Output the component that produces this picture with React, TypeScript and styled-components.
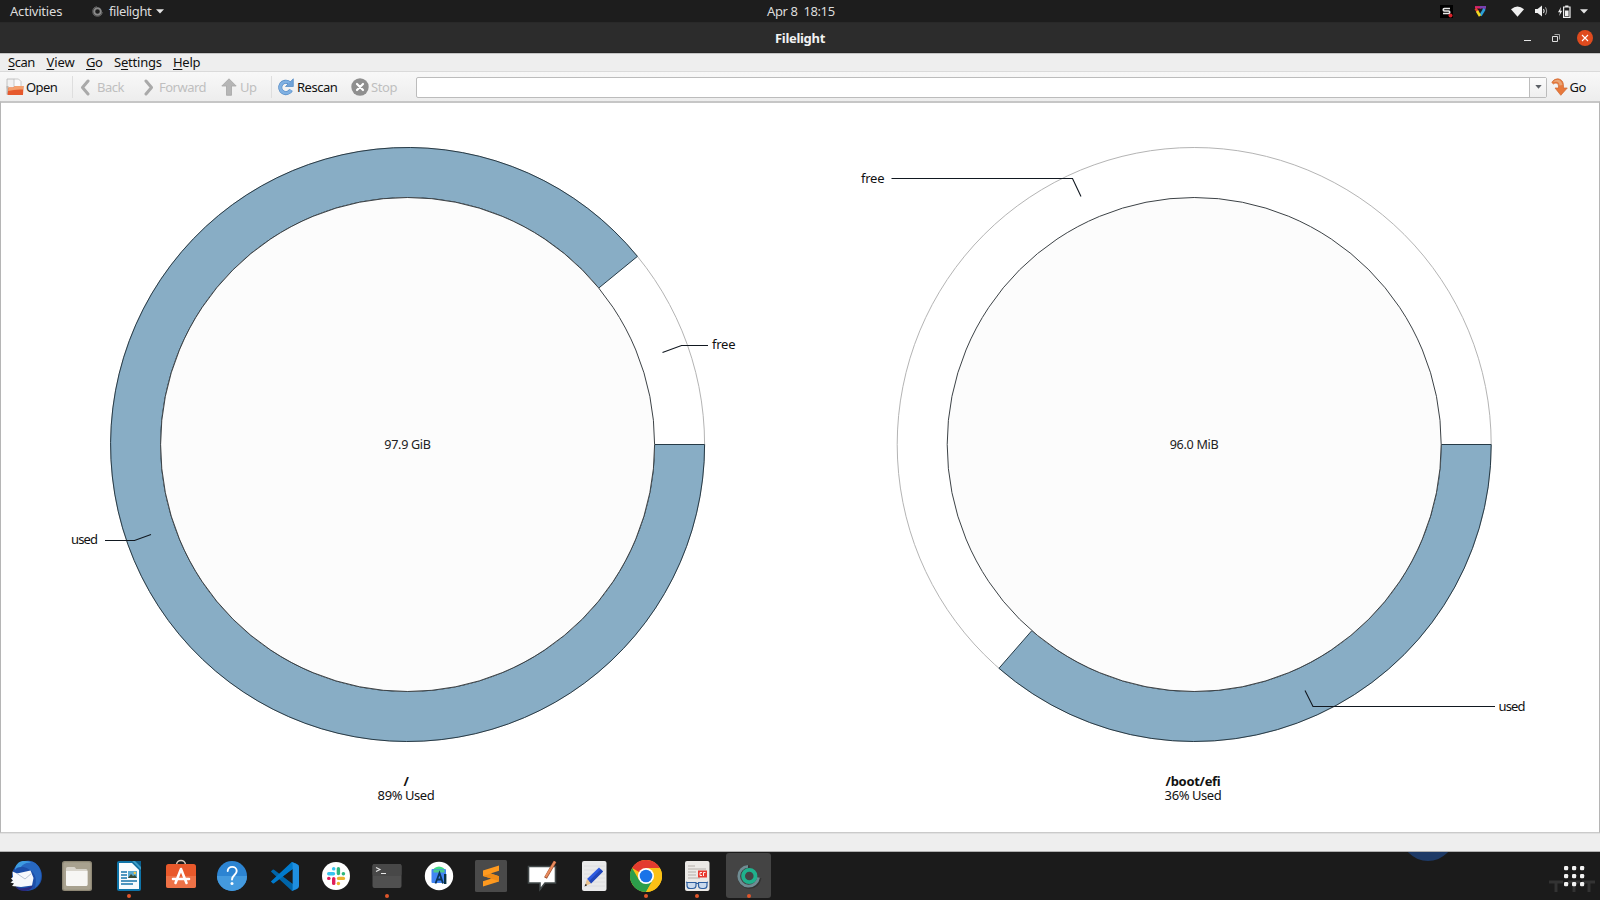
import React from "react";
import styled, { createGlobalStyle } from "styled-components";

const GlobalStyle = createGlobalStyle`
  * { box-sizing: border-box; }
  html, body { margin: 0; padding: 0; background: #1b1b1b; overflow: hidden; }
  body { font-family: "Noto Sans", "Open Sans", sans-serif; font-size: 13px; color: #111; }
  svg { display: block; flex: none; }
`;

const Desktop = styled.div`
  width: 1600px;
  height: 900px;
  display: flex;
  flex-direction: column;
  overflow: hidden;
`;

const TopBar = styled.header`
  height: 22px;
  flex: none;
  background: #1d1d1d;
  color: #dcdcdc;
  display: grid;
  grid-template-columns: 1fr auto 1fr;
  align-items: center;
`;

const TopGroup = styled.div<{ $end?: boolean }>`
  display: flex;
  align-items: center;
  height: 22px;
  justify-content: ${(p) => (p.$end ? "flex-end" : "flex-start")};
`;

/* One run of text in a slot of fixed width */
const Label = styled.span<{ $w: number; $ml?: number; $ls?: number; $dim?: boolean }>`
  display: block;
  flex: none;
  white-space: pre;
  line-height: 18px;
  width: ${(p) => p.$w}px;
  margin-left: ${(p) => p.$ml ?? 0}px;
  letter-spacing: ${(p) => p.$ls ?? -0.2}px;
  color: ${(p) => (p.$dim ? "#bfbfbf" : "inherit")};
  u { text-underline-offset: 2px; text-decoration-thickness: 1px; }
`;

const Gap = styled.span<{ $w: number }>`
  flex: none;
  width: ${(p) => p.$w}px;
`;

const TitleBar = styled.div`
  height: 31px;
  flex: none;
  background: #2c2c2c;
  border-top: 1px solid #292929;
  border-bottom: 1px solid #262626;
  display: grid;
  grid-template-columns: 1fr auto 1fr;
  align-items: center;
  color: #f2f2f2;
`;

const WindowTitle = styled.h1`
  margin: 0;
  font-size: 13px;
  line-height: 18px;
  font-weight: 700;
  letter-spacing: -0.3px;
`;

const WindowButtons = styled.div`
  display: flex;
  justify-content: flex-end;
  align-items: center;
  padding-right: 7px;
`;

const CloseButton = styled.div`
  width: 16px;
  height: 16px;
  border-radius: 50%;
  background: #df4b1e;
  margin-left: 17px;
  display: flex;
  align-items: center;
  justify-content: center;
`;

const MenuBar = styled.nav`
  height: 19px;
  flex: none;
  background: #eeeeee;
  border-top: 1px solid #c4c4c4;
  border-bottom: 1px solid #dadada;
  display: flex;
  align-items: center;
  padding: 0 0 2px 8px;
`;

const ToolBar = styled.div`
  height: 29px;
  flex: none;
  background: linear-gradient(#f8f8f8, #ededed);
  display: flex;
  align-items: center;
  padding: 1px 0 0 6px;
`;

const Separator = styled.span<{ $ml: number }>`
  flex: none;
  width: 1px;
  height: 22px;
  background: #dedede;
  margin-left: ${(p) => p.$ml}px;
`;

const PathCombo = styled.div`
  width: 1131px;
  height: 21px;
  flex: none;
  margin-left: 19px;
  border: 1px solid #bcbcbc;
  border-radius: 2px;
  background: #fff;
  display: flex;
  justify-content: flex-end;
`;

const ComboArrow = styled.div`
  width: 17px;
  border-left: 1px solid #bcbcbc;
  background: linear-gradient(#fbfbfb, #efefef);
  display: flex;
  align-items: center;
  justify-content: center;
`;

const MapView = styled.main`
  height: 732px;
  flex: none;
  background: #fff;
  border: 1px solid #b5b5b5;
  border-top: 2px solid #c6c6c6;
  border-bottom: 1px solid #cacaca;
  display: grid;
  grid-template-columns: 813px 1fr;
`;

const Volume = styled.section`
  display: flex;
  flex-direction: column;
  align-items: flex-start;
`;

const Caption = styled.div<{ $shift: number }>`
  width: 200px;
  margin-left: ${(p) => p.$shift}px;
  text-align: center;
  line-height: 14px;
  letter-spacing: -0.42px;
  strong { display: block; letter-spacing: -0.3px; }
`;

const StatusBar = styled.footer`
  height: 19px;
  flex: none;
  background: #eeeeee;
  border-top: 1px solid #e0e0e0;
  border-bottom: 1px solid #b0b0b0;
`;

const Dock = styled.div`
  position: relative;
  height: 48px;
  flex: none;
  background: #1b1b1b;
  display: flex;
  overflow: hidden;
`;

const DockItem = styled.div<{ $active?: boolean; $running?: boolean }>`
  position: relative;
  width: 51.65px;
  height: 48px;
  flex: none;
  display: flex;
  align-items: center;
  justify-content: center;
  &::before {
    content: "";
    display: ${(p) => (p.$active ? "block" : "none")};
    position: absolute;
    inset: 1px 3.5px 2px 3.5px;
    border-radius: 3px;
    background: #444;
  }
  &::after {
    content: "";
    display: ${(p) => (p.$running ? "block" : "none")};
    position: absolute;
    left: 24px;
    bottom: 2px;
    width: 4px;
    height: 4px;
    border-radius: 50%;
    background: #e0562b;
  }
  svg { position: relative; }
`;

const BlueGlow = styled.div`
  position: absolute;
  left: 1401px;
  top: -45px;
  width: 54px;
  height: 54px;
  border-radius: 50%;
  background: #1e3a66;
`;

const AppsButton = styled.div`
  position: absolute;
  left: 1548px;
  top: 12px;
`;

type Point = [number, number];

interface RingProps {
  cx: number;
  width: number;
  usedDeg: number;
  size: string;
  sizeWidth: number;
  lines: { points: Point[]; label: string; x: number; y: number; w: number }[];
}

const CY = 341.5;
const R_OUT = 297;
const R_IN = 247;

function Ring({ cx, width, usedDeg, size, sizeWidth, lines }: RingProps) {
  const a = (usedDeg * Math.PI) / 180;
  const at = (r: number) => `${cx + r * Math.cos(a)} ${CY + r * Math.sin(a)}`;
  const large = usedDeg > 180 ? 1 : 0;
  return (
    <svg width={width} height={671} viewBox={`0 0 ${width} 671`}>
      <circle cx={cx} cy={CY} r={R_OUT} fill="#fff" stroke="#b4b4b4" strokeWidth="1" />
      <path
        d={`M${cx + R_OUT} ${CY} A${R_OUT} ${R_OUT} 0 ${large} 1 ${at(R_OUT)} L${at(R_IN)} A${R_IN} ${R_IN} 0 ${large} 0 ${cx + R_IN} ${CY} Z`}
        fill="#88adc5"
        stroke="#263a46"
        strokeWidth="1"
      />
      <circle cx={cx} cy={CY} r={R_IN} fill="#fcfcfc" stroke="#3c4246" strokeWidth="1" />
      <text x={cx - sizeWidth / 2} y={CY + 4.5} fontSize="12.6" fill="#222" textLength={sizeWidth}>
        {size}
      </text>
      {lines.map((l) => (
        <g key={l.label}>
          <polyline points={l.points.map((p) => p.join(",")).join(" ")} fill="none" stroke="#111820" strokeWidth="1.1" />
          <text x={l.x} y={l.y} fontSize="13" fill="#111" textLength={l.w}>
            {l.label}
          </text>
        </g>
      ))}
    </svg>
  );
}

const Thunderbird = () => (
  <svg width="34" height="34" viewBox="0 0 34 34">
    <circle cx="18" cy="17" r="15" fill="#1d4fa8" />
    <path d="M8 7C13 0 25 0 30 8c4 8 2 17-4 21 2-8 1-14-5-18-4-3-9-4-13-4z" fill="#2868c0" />
    <path d="M14 2c3 0 6 0 8 2-4-1-8 1-10 4-3 0-5 1-6 3 0-5 4-9 8-9z" fill="#3d9be0" />
    <path d="M3.500 12.500L8 14.500 21.500 11.500 24.500 19 23 26.500 12 28 3 27l2-2.500-3.500-1L4 21.500 2 19.500l2-1.500z" fill="#f7f9fc" />
    <path d="M8 14.500l8 5.500 7-6" fill="none" stroke="#b8c4d4" strokeWidth="1" />
    <path d="M6 27.500c5 2.500 11 2.500 18-1-3 7-13 7.500-18 1z" fill="#2b2a80" />
  </svg>
);

const Files = () => (
  <svg width="34" height="34" viewBox="0 0 34 34">
    <rect x="2" y="2" width="30" height="30" rx="2.500" fill="#8f8876" />
    <rect x="3.300" y="3.300" width="27.400" height="27.400" rx="1.800" fill="#a8a18f" />
    <path d="M6 9.500Q6 8 7.500 8H14q1 0 1.500 1l.5 1h10q1.500 0 1.500 1.500V25q0 1.500-1.500 1.500H7.500Q6 26.500 6 25z" fill="#d8d4cb" />
    <path d="M6 12h21.500v13.500q0 1.500-1.500 1.500H7.500Q6 27 6 25.500z" fill="#f7f6f4" />
  </svg>
);

const Writer = () => (
  <svg width="34" height="34" viewBox="0 0 34 34">
    <path d="M5 4q0-2 2-2h14l8 0v28q0 2-2 2H7q-2 0-2-2z" fill="#0f74a8" />
    <path d="M7 4h13l7 7v19H7z" fill="#f8fbfd" />
    <path d="M19 2h10v10z" fill="#0c5f8c" />
    <path d="M20 2l9 9V8l-6-6z" fill="#3a9cc8" />
    <path d="M9 13h6M9 16h6M9 19h6M9 22h16M9 25h12" stroke="#1876ab" strokeWidth="1.400" />
    <rect x="16" y="12" width="9" height="7" fill="#5aa9cf" />
    <path d="M16 19l3-4 2 2 2-1 2 3z" fill="#384a33" />
    <circle cx="22.800" cy="14" r="1.200" fill="#f5c842" />
  </svg>
);

const Software = () => (
  <svg width="34" height="34" viewBox="0 0 34 34">
    <path d="M12.500 6c0-6 9-6 9 0" fill="none" stroke="#d9c7b8" strokeWidth="1.400" />
    <rect x="2" y="5" width="30" height="24" rx="2.500" fill="#e9592b" />
    <path d="M2 17h30v9.500q0 2.500-2.500 2.500h-25Q2 29 2 26.500z" fill="#ee7247" />
    <path d="M11.500 24L17 10l5.500 14M9 20h16" fill="none" stroke="#fff" strokeWidth="2.600" strokeLinecap="round" strokeLinejoin="round" />
  </svg>
);

const HelpIcon = () => (
  <svg width="34" height="34" viewBox="0 0 34 34">
    <circle cx="17" cy="17" r="15" fill="#2c84d2" />
    <path d="M2 17a15 15 0 0 0 30 0z" fill="#449ade" />
    <path d="M12.700 12c0-5.600 9-5.400 9 0 0 4-4.700 4-4.700 8.500" fill="none" stroke="#fff" strokeWidth="1.900" strokeLinecap="round" />
    <circle cx="17" cy="24.500" r="1.500" fill="#fff" />
  </svg>
);

const VsCode = () => (
  <svg width="29" height="29" viewBox="0 0 100 100">
    <path d="M3 33l6-6q2-2 5 0l82 62q-3 5-6 6l-14 5z" fill="#0065a9" />
    <path d="M3 67l6 6q2 2 5 0L96 11 90 5 75 0z" fill="#007acc" />
    <path d="M75 0l20 9q5 2 5 8v66q0 6-5 8l-20 9q3-2 3-7V8q0-6-3-8z" fill="#1f8fe0" />
    <path d="M76 28v44L47 50z" fill="#1b1b1b" />
  </svg>
);

const Slack = () => (
  <svg width="30" height="30" viewBox="0 0 30 30">
    <circle cx="15" cy="15" r="14" fill="#fff" />
    <g strokeWidth="3.400" strokeLinecap="round">
      <path d="M7.700 12.700h4.800" stroke="#36c5f0" />
      <path d="M12.700 7.600v.3" stroke="#36c5f0" />
      <path d="M17.400 7.700v4.800" stroke="#2eb67d" />
      <path d="M22.300 12.700h.2" stroke="#2eb67d" />
      <path d="M17.600 17.400h4.800" stroke="#ecb22e" />
      <path d="M17.400 22.400v.2" stroke="#ecb22e" />
      <path d="M12.700 17.600v4.800" stroke="#e01e5a" />
      <path d="M7.700 17.400h.2" stroke="#e01e5a" />
    </g>
  </svg>
);

const Terminal = () => (
  <svg width="30" height="26" viewBox="0 0 30 26">
    <rect x="0.500" y="1" width="29" height="24" rx="2" fill="#505050" />
    <rect x="0.500" y="1" width="29" height="12" rx="2" fill="#484848" />
    <path d="M4 4.500l4 2-4 2M9 10.500h5" fill="none" stroke="#e8e8e8" strokeWidth="1.100" />
  </svg>
);

const AndroidStudio = () => (
  <svg width="30" height="30" viewBox="0 0 30 30">
    <circle cx="15" cy="15" r="14.200" fill="#fff" />
    <path d="M9 9q1-3 6-3.500 5 .5 6 3.500z" fill="#3ddc84" />
    <rect x="7.500" y="8" width="14.500" height="14" rx="1" fill="#4285f4" />
    <path d="M9.500 8.500h11v3h-11z" fill="#4cc98d" />
    <path d="M11.500 22.500L15.500 12l3.500 10.500M13 18.500h5" fill="none" stroke="#0b3558" strokeWidth="1.800" />
    <path d="M20 13h2.400v10H20z" fill="#073042" />
  </svg>
);

const Sublime = () => (
  <svg width="32" height="32" viewBox="0 0 32 32">
    <rect width="32" height="32" rx="1.500" fill="#4a4a4a" />
    <path d="M8 10.500L24 5.500v5.300L15.500 13.500 24 16.200v5.200L8 26.500v-5.200l8.500-2.700L8 16z" fill="#ff9a1f" />
    <path d="M8 16l8-2.600 8 2.800v5l-8-2.600z" fill="#f08c18" />
  </svg>
);

const Board = () => (
  <svg width="34" height="34" viewBox="0 0 34 34">
    <path d="M3.500 7.500H30.500V24H20l-5 6.500V24H3.500z" fill="#fff" stroke="#42494a" strokeWidth="1.600" />
    <path d="M30 2.500L20.500 19" stroke="#9d4f2c" strokeWidth="3.200" />
    <path d="M30 2.500L20.800 18" stroke="#e98b5e" strokeWidth="2.200" />
  </svg>
);

const Editor = () => (
  <svg width="34" height="34" viewBox="0 0 34 34">
    <rect x="5" y="2" width="24.500" height="30" rx="2" fill="#e9e9ea" />
    <path d="M7 7h21M7 11h21M7 15h21M7 19h21M7 23h21M7 27h21" stroke="#dcdcdf" strokeWidth="1" />
    <path d="M22 8.500l4 4L14 24.500l-4-4.500z" fill="#2d5ae0" />
    <path d="M23.800 10.300l2.200 2.200L14 24.500l-2-2.200z" fill="#2146b8" />
    <path d="M10 20l4 4.500-6 2.500z" fill="#e8c08c" />
    <path d="M8.700 24.800l1.400 1.500L7.500 27.500z" fill="#222" />
  </svg>
);

const Chrome = () => (
  <svg width="32" height="32" viewBox="0 0 32 32">
    <circle cx="16" cy="16" r="16" fill="#fbc116" />
    <path d="M16 16L2.140 8A16 16 0 0 1 29.860 8H16z" fill="#e33b2e" />
    <path d="M2.140 8A16 16 0 0 0 16 32l6.930-12L16 16 9.070 20z" fill="#2c9e4b" />
    <path d="M29.860 8A16 16 0 0 1 16 32l6.930-12L16 8z" fill="#fbc116" />
    <circle cx="16" cy="16" r="8" fill="#fff" />
    <circle cx="16" cy="16" r="6.300" fill="#1a73e8" />
  </svg>
);

const DocViewer = () => (
  <svg width="34" height="34" viewBox="0 0 34 34">
    <rect x="5" y="2" width="24.500" height="30" rx="2" fill="#ebe9e6" />
    <path d="M8 7h7M8 10h18M8 13h8M8 16h8M8 19h12" stroke="#b5b0a9" strokeWidth="1.100" />
    <rect x="18" y="11.500" width="9" height="7" fill="#e8392f" />
    <path d="M22 13.500h-2v3h2M23.500 17v-3.500h2" fill="none" stroke="#fff" strokeWidth=".9" />
    <path d="M7 23.500h9v3q0 3-3.500 3H10q-3 0-3-3zM18.500 23.500h8.500v3q0 3-3 3H22q-3.500 0-3.500-3zM16 24.500h2.500M7 23.500l-1-.5M27 23.500l1-.5" fill="#c9d9ec" stroke="#2e5f9f" strokeWidth="1.200" />
  </svg>
);

const FilelightIcon = () => (
  <svg width="28" height="28" viewBox="0 0 28 28">
    <path d="M14 3.500A10.500 10.500 0 1 0 24.500 15" fill="none" stroke="#333" strokeWidth="2.500" transform="translate(.6 1)" />
    <path d="M13 4.300A9.900 9.900 0 1 0 23.500 15.500" fill="none" stroke="#6f8c93" strokeWidth="2.800" />
    <circle cx="14.300" cy="14" r="6.200" fill="none" stroke="#1fb18c" strokeWidth="3.800" />
  </svg>
);

const DOCK = [
  { id: "thunderbird", icon: <Thunderbird /> },
  { id: "files", icon: <Files /> },
  { id: "writer", icon: <Writer />, running: true },
  { id: "software", icon: <Software /> },
  { id: "help", icon: <HelpIcon /> },
  { id: "code", icon: <VsCode /> },
  { id: "slack", icon: <Slack /> },
  { id: "terminal", icon: <Terminal />, running: true },
  { id: "studio", icon: <AndroidStudio /> },
  { id: "sublime", icon: <Sublime /> },
  { id: "board", icon: <Board /> },
  { id: "editor", icon: <Editor /> },
  { id: "chrome", icon: <Chrome />, running: true },
  { id: "viewer", icon: <DocViewer />, running: true },
  { id: "filelight", icon: <FilelightIcon />, running: true, active: true },
];

export default function App() {
  return (
    <>
      <GlobalStyle />
      <Desktop>
        <TopBar>
          <TopGroup>
            <Label $w={53} $ml={10}>Activities</Label>
            <Gap $w={29} />
            <svg width="11" height="11" viewBox="0 0 11 11">
              <circle cx="5.500" cy="5.500" r="3.300" fill="none" stroke="#8a8a8a" strokeWidth="2" />
              <path d="M5 .8A4.700 4.700 0 1 0 10.200 6" fill="none" stroke="#6e6e6e" strokeWidth="1" />
            </svg>
            <Label $w={43} $ml={6} $ls={-0.4}>filelight</Label>
            <Gap $w={4} />
            <svg width="8" height="5" viewBox="0 0 8 5"><path d="M0 .3h8L4 4.600z" fill="#e4e4e4" /></svg>
          </TopGroup>
          <Label $w={66} $ls={-0.4}>Apr 8  18:15</Label>
          <TopGroup $end>
            <svg width="13" height="13" viewBox="0 0 13 13">
              <rect width="13" height="13" fill="#000" />
              <path d="M10 3.500H4.300q-1 0-1 1.200t1 1.300h4.400q1 0 1 1.200t-1 1.300H3" fill="none" stroke="#e8e8e8" strokeWidth="1.700" />
              <circle cx="10.500" cy="10.500" r="2" fill="#d8232a" />
            </svg>
            <Gap $w={21} />
            <svg width="12" height="11" viewBox="0 0 12 11">
              <path d="M1 1.300h6" stroke="#d6246e" strokeWidth="2.400" />
              <path d="M6 1.300h5L9.500 4" fill="none" stroke="#7a3fae" strokeWidth="2.400" />
              <path d="M10.500 3L6.500 9.500" stroke="#2a9fd8" strokeWidth="2.600" />
              <path d="M1.500 2.500L4 6" stroke="#e8432e" strokeWidth="2.400" />
              <path d="M3 5l3 5" stroke="#f1d822" strokeWidth="2.600" />
            </svg>
            <Gap $w={25} />
            <svg width="13" height="11" viewBox="0 0 13 11"><path d="M0 3.200Q6.500-2.200 13 3.200L6.500 10.800z" fill="#efefef" /></svg>
            <Gap $w={11} />
            <svg width="13" height="12" viewBox="0 0 13 12">
              <path d="M0 4h2.500L7 .5v11L2.500 8H0z" fill="#efefef" />
              <path d="M8.500 4q1.400 2 0 4" fill="none" stroke="#efefef" strokeWidth="1.100" />
              <path d="M10.300 2.300q2.600 3.700 0 7.400" fill="none" stroke="#999" strokeWidth="1.100" />
            </svg>
            <Gap $w={10} />
            <svg width="13" height="13" viewBox="0 0 13 13">
              <path d="M3 2L0 7.300h2L1.200 11 4.200 5.800H2.400z" fill="#efefef" />
              <path d="M5.600 2h6.400v10.400H5.600zM7.200 1h3.200" fill="none" stroke="#efefef" strokeWidth="1.200" />
              <path d="M7 5.500h3.600v5.600H7z" fill="#efefef" />
            </svg>
            <Gap $w={9} />
            <svg width="8" height="5" viewBox="0 0 8 5"><path d="M0 .3h8L4 4.600z" fill="#e4e4e4" /></svg>
            <Gap $w={12} />
          </TopGroup>
        </TopBar>

        <TitleBar>
          <span />
          <WindowTitle>Filelight</WindowTitle>
          <WindowButtons>
            <svg width="7" height="8" viewBox="0 0 7 8"><path d="M0 6.500h7" stroke="#e6e6e6" /></svg>
            <Gap $w={21} />
            <svg width="8" height="8" viewBox="0 0 8 8">
              <path d="M.5 2.500h5v5h-5z" fill="none" stroke="#dedede" />
              <path d="M2.500.5h5v5" fill="none" stroke="#a5a5a5" />
            </svg>
            <CloseButton>
              <svg width="8" height="8" viewBox="0 0 8 8"><path d="M1 1l6 6M7 1L1 7" stroke="#fff" strokeWidth="1.100" /></svg>
            </CloseButton>
          </WindowButtons>
        </TitleBar>

        <MenuBar>
          <Label $w={27} $ls={-0.5}><u>S</u>can</Label>
          <Label $w={29} $ml={11.5} $ls={-0.1}><u>V</u>iew</Label>
          <Label $w={16} $ml={10.500} $ls={-0.4}><u>G</u>o</Label>
          <Label $w={47} $ml={12}>S<u>e</u>ttings</Label>
          <Label $w={28} $ml={12} $ls={-0.3}><u>H</u>elp</Label>
        </MenuBar>

        <ToolBar>
          <svg width="18" height="18" viewBox="0 0 18 18">
            <path d="M1 1h7l2 1.500v8H1z" fill="#f1f1f1" stroke="#b5b5b5" strokeWidth=".8" />
            <path d="M8 1h4.500l2.500 2.500V11H8z" fill="#fafafa" stroke="#bcbcbc" strokeWidth=".8" />
            <path d="M.5 8v8.500h2V8z" fill="#bdb6b0" />
            <path d="M1.500 17L2.500 9.500h5l1.500-1.500h8.500L17 17z" fill="#e6592d" />
            <path d="M2.500 9.500h5l1.500-1.500h8.500l-.3 3.500q-8-.5-15 1.500z" fill="#f4a06d" />
          </svg>
          <Label $w={31} $ml={2} $ls={-0.6}>Open</Label>
          <Separator $ml={15} />
          <Gap $w={7} />
          <svg width="10" height="17" viewBox="0 0 10 17"><path d="M8 2L2.500 8.500 8 15" fill="none" stroke="#a9a9a9" strokeWidth="3" strokeLinecap="round" strokeLinejoin="round" /></svg>
          <Label $w={27} $ml={7} $ls={-0.5} $dim>Back</Label>
          <Gap $w={20} />
          <svg width="10" height="17" viewBox="0 0 10 17"><path d="M2 2l5.500 6.500L2 15" fill="none" stroke="#a9a9a9" strokeWidth="3" strokeLinecap="round" strokeLinejoin="round" /></svg>
          <Label $w={47} $ml={5} $ls={-0.5} $dim>Forward</Label>
          <Gap $w={15} />
          <svg width="16" height="18" viewBox="0 0 16 18"><path d="M8 .8l7.200 7.200H10.500v9.300h-5V8H.8z" fill="#b6b6b6" stroke="#a6a6a6" strokeWidth=".8" strokeLinejoin="round" /></svg>
          <Label $w={16} $ml={3} $ls={-0.5} $dim>Up</Label>
          <Separator $ml={15} />
          <Gap $w={5} />
          <svg width="17" height="18" viewBox="0 0 17 18">
            <path d="M12.500 5A5.700 5.700 0 1 0 14 12" fill="none" stroke="#4e86c2" strokeWidth="4" />
            <path d="M16.300.8v7.700H8.500z" fill="#6fa2d8" stroke="#4e86c2" strokeWidth=".7" />
            <path d="M12.500 5A5.700 5.700 0 1 0 14 12" fill="none" stroke="#7fb0e2" strokeWidth="2.800" />
          </svg>
          <Label $w={40} $ml={3} $ls={-0.5}>Rescan</Label>
          <Gap $w={14} />
          <svg width="18" height="18" viewBox="0 0 18 18">
            <circle cx="9" cy="9" r="8.700" fill="#8f8f8f" />
            <path d="M6 6l6 6M12 6l-6 6" stroke="#fff" strokeWidth="2.200" strokeLinecap="round" />
          </svg>
          <Label $w={26} $ml={2} $ls={-0.4} $dim>Stop</Label>
          <PathCombo>
            <ComboArrow>
              <svg width="7" height="4" viewBox="0 0 7 4"><path d="M.3 0h6.400L3.500 3.800z" fill="#5c6066" /></svg>
            </ComboArrow>
          </PathCombo>
          <Gap $w={4} />
          <svg width="17" height="18" viewBox="0 0 17 18">
            <path d="M.8 4.500Q3 .5 7 .8 12.500 1.500 12.500 8v2h3.800L9.800 17.300 4 10H7.500V8Q7.500 5 5 5 3.500 5 2.500 6z" fill="#e8793c" stroke="#cf6830" strokeWidth=".7" strokeLinejoin="round" />
            <path d="M2 4Q4 1.500 7 1.800 10.500 2.500 11.500 7L8.500 7.500Q8 3.500 5 3.800z" fill="#e9a576" />
          </svg>
          <Label $w={17} $ml={1.500} $ls={-0.5}>Go</Label>
        </ToolBar>

        <MapView>
          <Volume>
            <Ring
              cx={406.6}
              width={813}
              usedDeg={320.7}
              size="97.9 GiB"
              sizeWidth={46.5}
              lines={[
                { label: "free", points: [[661.5, 249.5], [680.5, 242.5], [707, 242.5]], x: 711, y: 246, w: 23.5 },
                { label: "used", points: [[104, 437.500], [133.500, 437.500], [150, 431.500]], x: 70, y: 441, w: 27 },
              ]}
            />
            <Caption $shift={305}>
              <strong>/</strong>
              89% Used
            </Caption>
          </Volume>
          <Volume>
            <Ring
              cx={380.2}
              width={785}
              usedDeg={131.1}
              size="96.0 MiB"
              sizeWidth={49}
              lines={[
                { label: "free", points: [[77.500, 75.500], [258.500, 75.500], [267, 93.500]], x: 47, y: 80, w: 23.5 },
                { label: "used", points: [[491, 587.500], [499, 603.500], [681, 603.500]], x: 684.5, y: 608, w: 27 },
              ]}
            />
            <Caption $shift={279}>
              <strong>/boot/efi</strong>
              36% Used
            </Caption>
          </Volume>
        </MapView>

        <StatusBar />

        <Dock>
          {DOCK.map((d) => (
            <DockItem key={d.id} $running={d.running} $active={d.active}>
              {d.icon}
            </DockItem>
          ))}
          <BlueGlow />
          <AppsButton>
            <svg width="50" height="30" viewBox="0 0 50 30">
              <path d="M1 18h14M8 18v10M20 18h12M26 18v10M34 18h13M41 18v10" stroke="#333" strokeWidth="3" />
              {[4, 12, 20].map((y) =>
                [18, 26, 34].map((x) => <rect key={`${x}-${y}`} x={x - 2} y={y - 2} width="4.200" height="4.200" rx="1.200" fill="#f2f2f2" />)
              )}
            </svg>
          </AppsButton>
        </Dock>
      </Desktop>
    </>
  );
}
